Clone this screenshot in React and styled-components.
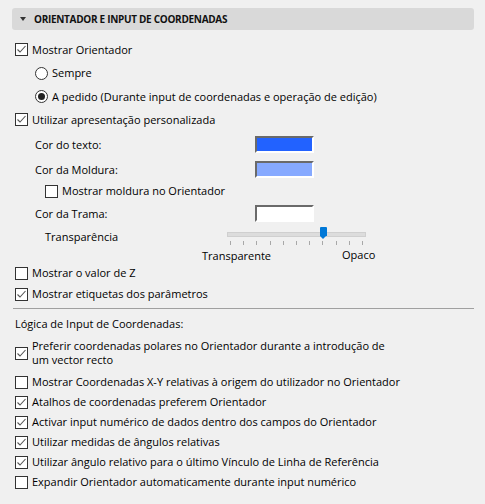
import React from "react";
import styled, { createGlobalStyle } from "styled-components";

const GlobalStyle = createGlobalStyle`
  body {
    margin: 0;
    background: #f0f0f0;
    font-family: "Open Sans", "Noto Sans", sans-serif;
    font-size: 11px;
    color: #000;
  }
`;

const Panel = styled.div`
  width: 485px;
  height: 504px;
  padding: 8px 11px 0 12px;
  box-sizing: border-box;
  overflow: hidden;
`;

const Header = styled.div`
  height: 22px;
  background: #d9d9d9;
  border-radius: 3px;
  display: flex;
  align-items: center;
  padding-left: 8px;
  margin-bottom: 8px;
  font-weight: 700;
  font-size: 10px;
  letter-spacing: -0.3px;
  color: #111;
`;

const Caret = styled.span`
  width: 0;
  height: 0;
  border-left: 3.5px solid transparent;
  border-right: 3.5px solid transparent;
  border-top: 4px solid #333;
  margin-right: 8px;
`;

const Row = styled.div`
  display: flex;
  align-items: center;
  height: ${(p) => p.h || 20}px;
  padding-left: ${(p) => p.indent || 3}px;
`;

const Box = styled.span`
  width: 13px;
  height: 13px;
  box-sizing: border-box;
  border: 1px solid #333;
  background: #fff;
  margin-right: 4px;
  flex-shrink: 0;
  display: flex;
  align-items: center;
  justify-content: center;
`;

const Radio = styled(Box)`
  border-radius: 50%;
`;

const Dot = styled.span`
  width: 7px;
  height: 7px;
  border-radius: 50%;
  background: #222;
`;

const Label = styled.span`
  white-space: nowrap;
  line-height: 14px;
`;

const FieldLabel = styled.span`
  width: ${(p) => p.w}px;
  flex-shrink: 0;
`;

const Swatch = styled.span`
  width: 59px;
  height: 17px;
  box-sizing: border-box;
  border-top: 2px solid #6a6a6a;
  border-left: 2px solid #6a6a6a;
  border-right: 2px solid #fff;
  border-bottom: 2px solid #fff;
  background: ${(p) => p.color};
`;

const SliderWrap = styled.div`
  position: relative;
  width: 139px;
  height: 22px;
`;

const Track = styled.div`
  position: absolute;
  left: 0;
  right: 0;
  top: 7px;
  height: 3px;
  background: #dcdcdc;
  border: 1px solid #cfcfcf;
`;

const Thumb = styled.div`
  position: absolute;
  top: 2px;
  width: 7px;
  height: 9px;
  background: #0078d7;
  border-radius: 1px 1px 0 0;
  &::after {
    content: "";
    position: absolute;
    top: 9px;
    left: 0;
    border-left: 3.5px solid transparent;
    border-right: 3.5px solid transparent;
    border-top: 3px solid #0078d7;
  }
`;

const Ticks = styled.div`
  position: absolute;
  left: 3px;
  right: 3px;
  top: 16px;
  display: flex;
  justify-content: space-between;
`;

const Tick = styled.span`
  width: 1px;
  height: 4px;
  background: #a8a8a8;
`;

const Separator = styled.div`
  height: 1px;
  background: #a0a0a0;
  margin: 3px 0 5px 1px;
`;

const Check = () => (
  <svg width="11" height="11" viewBox="0 0 11 11">
    <path d="M1.5 5.5 L4 8 L9.5 2" fill="none" stroke="#555" strokeWidth="1.1" />
  </svg>
);

const CheckRow = ({ checked, children, indent, h }) => (
  <Row indent={indent} h={h}>
    <Box>{checked && <Check />}</Box>
    <Label>{children}</Label>
  </Row>
);

const RadioRow = ({ selected, children, h }) => (
  <Row indent={23} h={h}>
    <Radio>{selected && <Dot />}</Radio>
    <Label>{children}</Label>
  </Row>
);

const ColorRow = ({ label, color, h }) => (
  <Row indent={23} h={h}>
    <FieldLabel w={220}>{label}</FieldLabel>
    <Swatch color={color} />
  </Row>
);

export default function App() {
  const ticks = Array.from({ length: 11 });
  return (
    <Panel>
      <GlobalStyle />
      <Header>
        <Caret />
        ORIENTADOR E INPUT DE COORDENADAS
      </Header>
      <CheckRow checked h={23}>Mostrar Orientador</CheckRow>
      <RadioRow h={24}>Sempre</RadioRow>
      <RadioRow selected h={23}>
        A pedido (Durante input de coordenadas e operação de edição)
      </RadioRow>
      <CheckRow checked h={23}>Utilizar apresentação personalizada</CheckRow>
      <ColorRow label="Cor do texto:" color="#2262ff" h={26} />
      <ColorRow label="Cor da Moldura:" color="#86a9ff" h={24} />
      <CheckRow indent={33} h={20}>Mostrar moldura no Orientador</CheckRow>
      <ColorRow label="Cor da Trama:" color="#ffffff" h={24} />
      <Row indent={33} h={22}>
        <FieldLabel w={182}>Transparência</FieldLabel>
        <SliderWrap>
          <Track />
          <Thumb style={{ left: 93 }} />
          <Ticks>
            {ticks.map((_, i) => (
              <Tick key={i} />
            ))}
          </Ticks>
        </SliderWrap>
      </Row>
      <Row indent={190} h={16}>
        <FieldLabel w={140}>Transparente</FieldLabel>
        <Label>Opaco</Label>
      </Row>
      <CheckRow h={20}>Mostrar o valor de Z</CheckRow>
      <CheckRow checked h={22}>Mostrar etiquetas dos parâmetros</CheckRow>
      <Separator />
      <Row h={20}>
        <Label>Lógica de Input de Coordenadas:</Label>
      </Row>
      <CheckRow checked h={38}>
        Preferir coordenadas polares no Orientador durante a introdução de
        <br />
        um vector recto
      </CheckRow>
      <CheckRow h={20}>
        Mostrar Coordenadas X-Y relativas à origem do utilizador no Orientador
      </CheckRow>
      <CheckRow checked h={20}>Atalhos de coordenadas preferem Orientador</CheckRow>
      <CheckRow checked h={20}>
        Activar input numérico de dados dentro dos campos do Orientador
      </CheckRow>
      <CheckRow checked h={20}>Utilizar medidas de ângulos relativas</CheckRow>
      <CheckRow checked h={20}>
        Utilizar ângulo relativo para o último Vínculo de Linha de Referência
      </CheckRow>
      <CheckRow h={20}>Expandir Orientador automaticamente durante input numérico</CheckRow>
    </Panel>
  );
}
